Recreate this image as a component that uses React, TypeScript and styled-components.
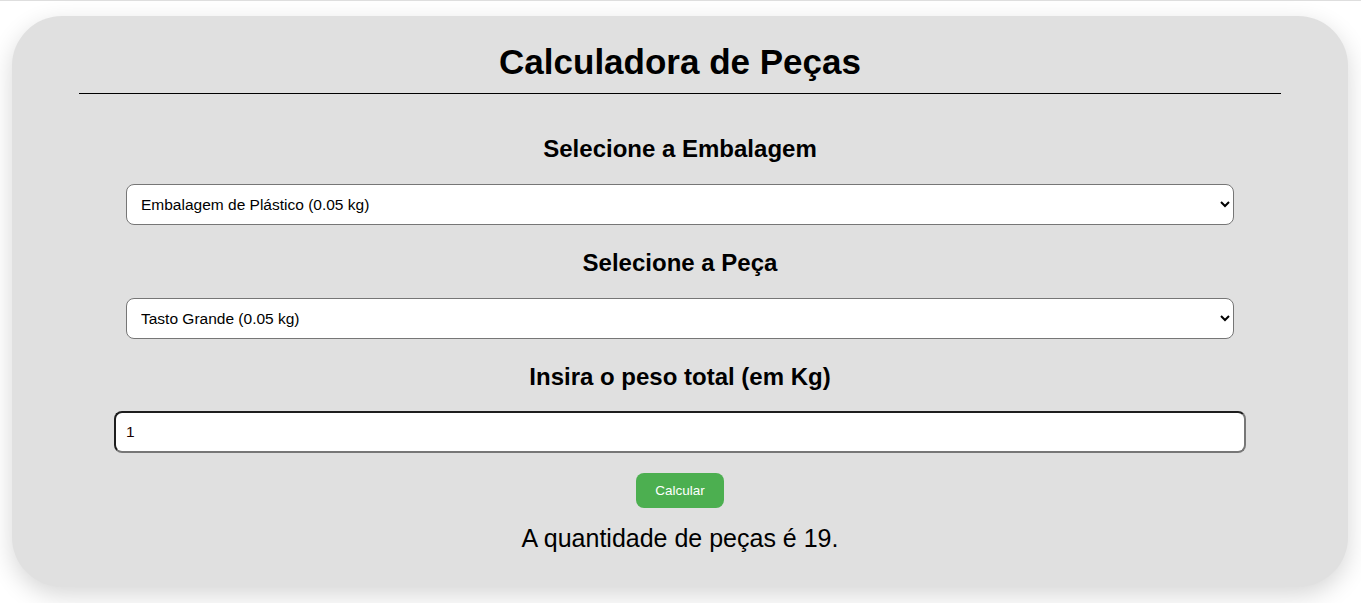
import React, { useState } from "react";
import styled, { createGlobalStyle } from "styled-components";

const Global = createGlobalStyle`
  html, body { margin: 0; padding: 0; }
  body {
    background: #ffffff;
    font-family: "Liberation Sans", Arial, sans-serif;
    border-top: 1px solid #dedede;
  }
  #root { padding: 15px 13px 16px 12px; }
`;

const Card = styled.div`
  background: #e0e0e0;
  border-radius: 50px;
  box-shadow: 0 8px 24px rgba(0, 0, 0, 0.16);
  padding: 27px 67px 36px;
  display: flex;
  flex-direction: column;
  align-items: stretch;
`;

const Title = styled.h1`
  margin: 0;
  font-size: 35px;
  line-height: 37px;
  font-weight: 700;
  text-align: center;
  color: #000;
`;

const Rule = styled.hr`
  margin: 13px 0 0;
  border: none;
  border-top: 1px solid #000;
  height: 0;
`;

const Label = styled.h2<{ $top: number }>`
  margin: ${(p) => p.$top}px 0 0;
  font-size: 24px;
  line-height: 25px;
  font-weight: 700;
  text-align: center;
  color: #000;
`;

const Select = styled.select`
  margin: 23px 47px 0;
  height: 41px;
  padding: 0 8px 0 10px;
  font-family: "Liberation Sans", Arial, sans-serif;
  font-size: 15.5px;
  color: #000;
  background: #fff;
  border: 1px solid #767676;
  border-radius: 8px;
`;

const Input = styled.input`
  margin: 22px 35px 0;
  height: 42px;
  box-sizing: border-box;
  padding: 0 10px;
  font-family: "Liberation Sans", Arial, sans-serif;
  font-size: 15.5px;
  color: #1a0000;
  background: #fff;
  border-style: solid;
  border-width: 2px;
  border-color: #1e1e1e #777 #777 #1e1e1e;
  border-radius: 8px;
  outline: none;
`;

const Button = styled.button`
  align-self: center;
  margin-top: 20px;
  width: 88px;
  height: 35px;
  border: none;
  border-radius: 8px;
  background: #4caf50;
  color: #fff;
  font-family: "Liberation Sans", Arial, sans-serif;
  font-size: 13.5px;
  cursor: pointer;
`;

const Result = styled.p`
  margin: 17px 0 0;
  font-size: 25px;
  line-height: 26px;
  text-align: center;
  color: #000;
`;

export default function App() {
  const [peso, setPeso] = useState("1");
  return (
    <>
      <Global />
      <Card>
        <Title>Calculadora de Peças</Title>
        <Rule />
        <Label $top={42}>Selecione a Embalagem</Label>
        <Select defaultValue="plastico">
          <option value="plastico">Embalagem de Plástico (0.05 kg)</option>
        </Select>
        <Label $top={25}>Selecione a Peça</Label>
        <Select defaultValue="tasto">
          <option value="tasto">Tasto Grande (0.05 kg)</option>
        </Select>
        <Label $top={25}>Insira o peso total (em Kg)</Label>
        <Input value={peso} onChange={(e) => setPeso(e.target.value)} />
        <Button>Calcular</Button>
        <Result>A quantidade de peças é 19.</Result>
      </Card>
    </>
  );
}
